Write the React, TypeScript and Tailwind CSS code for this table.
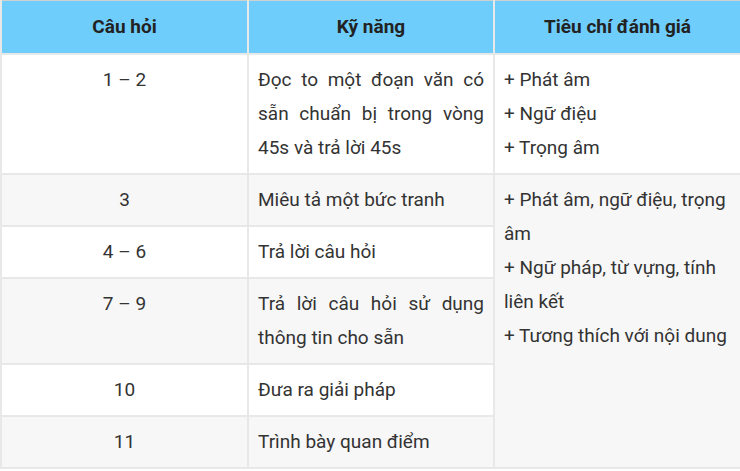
import React from "react";

const cell = "border-2 border-[#e8e8e8] align-top px-[9px] pt-[8px] pb-[8px] leading-[34px]";

export default function App() {
  return (
    <div className="w-[740px] h-[471px] overflow-hidden bg-white text-[19px] text-[#333333]" style={{ fontFamily: "Roboto, 'Noto Sans', sans-serif" }}>
      <table className="w-[740px] table-fixed border-collapse">
        <colgroup>
          <col className="w-[247px]" />
          <col className="w-[246px]" />
          <col className="w-[247px]" />
        </colgroup>
        <thead>
          <tr className="bg-[#6ecdfb] h-[53px]">
            <th className="border-2 border-[#e8e8e8] border-t-[#d0d0d0] border-t text-center font-bold text-[#222222] align-middle">Câu hỏi</th>
            <th className="border-2 border-[#e8e8e8] border-t-[#d0d0d0] border-t text-center font-bold text-[#222222] align-middle">Kỹ năng</th>
            <th className="border-2 border-[#e8e8e8] border-t-[#d0d0d0] border-t text-center font-bold text-[#222222] align-middle">Tiêu chí đánh giá</th>
          </tr>
        </thead>
        <tbody>
          <tr className="bg-white">
            <td className={`${cell} text-center`}>1 – 2</td>
            <td className={`${cell} text-justify`}>Đọc to một đoạn văn có sẵn chuẩn bị trong vòng 45s và trả lời 45s</td>
            <td className={cell}>
              <div>+ Phát âm</div>
              <div>+ Ngữ điệu</div>
              <div>+ Trọng âm</div>
            </td>
          </tr>
          <tr className="bg-[#f7f7f7]">
            <td className={`${cell} text-center`}>3</td>
            <td className={`${cell} text-justify`}>Miêu tả một bức tranh</td>
            <td className={`${cell} bg-[#f7f7f7]`} rowSpan={5}>
              <div>+ Phát âm, ngữ điệu, trọng âm</div>
              <div>+ Ngữ pháp, từ vựng, tính liên kết</div>
              <div>+ Tương thích với nội dung</div>
            </td>
          </tr>
          <tr className="bg-white">
            <td className={`${cell} text-center`}>4 – 6</td>
            <td className={`${cell} text-justify`}>Trả lời câu hỏi</td>
          </tr>
          <tr className="bg-[#f7f7f7]">
            <td className={`${cell} text-center`}>7 – 9</td>
            <td className={`${cell} text-justify`}>Trả lời câu hỏi sử dụng thông tin cho sẵn</td>
          </tr>
          <tr className="bg-white">
            <td className={`${cell} text-center`}>10</td>
            <td className={`${cell} text-justify`}>Đưa ra giải pháp</td>
          </tr>
          <tr className="bg-[#f7f7f7]">
            <td className={`${cell} text-center`}>11</td>
            <td className={`${cell} text-justify`}>Trình bày quan điểm</td>
          </tr>
        </tbody>
      </table>
    </div>
  );
}
